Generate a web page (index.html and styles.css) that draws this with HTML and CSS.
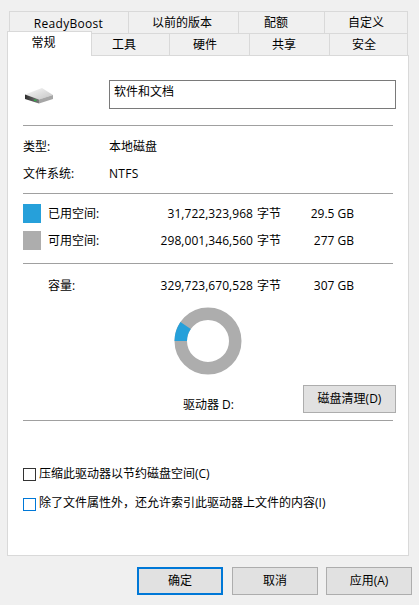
FILE: index.html
```html
<!DOCTYPE html>
<html lang="zh">
<head>
<meta charset="utf-8">
<title>属性</title>
<link rel="stylesheet" href="styles.css">
</head>
<body>
<div class="tabs">
  <div class="tab-row back">
    <div class="tab w119 latin">ReadyBoost</div>
    <div class="tab w110 nudge3">以前的版本</div>
    <div class="tab w86 nudge11">配额</div>
    <div class="tab w83">自定义</div>
  </div>
  <div class="tab-row front">
    <div class="tab w78 nudge13">工具</div>
    <div class="tab w80 nudge9">硬件</div>
    <div class="tab w80 nudge11">共享</div>
    <div class="tab w78 nudge9">安全</div>
  </div>
  <div class="tab selected">常规</div>
</div>
<main class="panel">
  <div class="head">
    <svg class="drive" width="30" height="18" viewBox="0 0 30 18">
      <defs>
        <linearGradient id="top" x1="0" y1="0" x2="1" y2="1"><stop offset="0" stop-color="#fafafa"/><stop offset="1" stop-color="#c4c4c4"/></linearGradient>
        <linearGradient id="front" x1="0" y1="0" x2="1" y2="0"><stop offset="0" stop-color="#2e2e2e"/><stop offset="1" stop-color="#7a7a7a"/></linearGradient>
      </defs>
      <path d="M1 7.5 18 1 29 8 15 12.5Z" fill="url(#top)"/>
      <path d="M1 7.5 15 12.5V16.5L1 12Z" fill="url(#front)"/>
      <path d="M15 12.5 29 8V12L15 16.5Z" fill="#a6a6a6"/>
      <path d="M10 12.5h2.4v1.6H10Z" fill="#2fae4a"/>
    </svg>
    <div class="name">软件和文档</div>
  </div>
  <hr class="sep s1">
  <div class="info first"><span class="lbl">类型:</span><span>本地磁盘</span></div>
  <div class="info second"><span class="lbl">文件系统:</span><span class="wide">NTFS</span></div>
  <hr class="sep s2">
  <div class="space used"><i class="swatch blue"></i><span class="sl">已用空间:</span><span class="bytes">31,722,323,968</span><span class="unit">字节</span><span class="gb">29.5 GB</span></div>
  <div class="space free"><i class="swatch grey"></i><span class="sl">可用空间:</span><span class="bytes">298,001,346,560</span><span class="unit">字节</span><span class="gb">277 GB</span></div>
  <hr class="sep s3">
  <div class="space cap"><i class="noswatch"></i><span class="sl">容量:</span><span class="bytes">329,723,670,528</span><span class="unit">字节</span><span class="gb">307 GB</span></div>
  <svg class="donut" width="68" height="68" viewBox="-34 -34 68 68">
    <circle r="27.25" fill="none" stroke="#adadad" stroke-width="12.5"/>
    <path d="M-27.25 0A27.25 27.25 0 0 1-22.4-15.5" fill="none" stroke="#26a0da" stroke-width="12.5"/>
  </svg>
  <div class="drive-row">
    <span class="dl">驱动器 D:</span>
    <button class="btn clean">磁盘清理(D)</button>
  </div>
  <hr class="sep s4">
  <label class="check c1"><i class="box"></i><span>压缩此驱动器以节约磁盘空间(C)</span></label>
  <label class="check c2"><i class="box hot"></i><span>除了文件属性外，还允许索引此驱动器上文件的内容(I)</span></label>
</main>
<footer class="actions">
  <button class="btn act default">确定</button>
  <button class="btn act">取消</button>
  <button class="btn act">应用(A)</button>
</footer>
</body>
</html>
```
FILE: styles.css
```css
* { box-sizing: border-box; }
html, body { margin: 0; height: 100%; }
body {
  width: 419px;
  height: 605px;
  overflow: hidden;
  background: #f0f0f0;
  color: #000;
  font: 12px/16px "Open Sans", "Noto Sans CJK SC", sans-serif;
  padding: 11px 0 0 7px;
}
.tabs { position: relative; width: 402px; height: 44px; }
.tab-row { display: flex; height: 22px; margin-left: 2px; }
.tab-row.front { margin-left: 84px; }
.tab {
  display: flex;
  align-items: center;
  justify-content: center;
  height: 22px;
  border: 1px solid #d9d9d9;
  border-bottom: 0;
  margin-right: -1px;
  background: #f0f0f0;
}
.w119 { width: 120px; }
.w110 { width: 111px; }
.w86 { width: 87px; }
.w83 { width: 84px; }
.w78 { width: 79px; }
.w80 { width: 81px; }
.latin { letter-spacing: .3px; padding: 2px 1px 0 0; }
.nudge3 { padding-right: 3px; }
.nudge9 { padding-right: 9px; }
.nudge11 { padding-right: 11px; }
.nudge13 { padding-right: 13px; }
.tab.selected {
  position: absolute;
  left: 0;
  top: 20px;
  width: 85px;
  height: 25px;
  z-index: 2;
  background: #fff;
  padding: 0 12px 3px 0;
}
.panel {
  width: 402px;
  height: 501px;
  background: #fff;
  border: 1px solid #d9d9d9;
  padding: 24px 12px 0 15px;
}
.head { display: flex; align-items: flex-start; height: 29px; }
.drive { margin: 7px 0 0 1px; }
.name {
  margin-left: 55px;
  width: 287px;
  height: 29px;
  border: 1px solid #7a7a7a;
  padding: 3px 4px;
}
.sep { display: block; width: 370px; height: 1px; margin: 0; border: 0; background: #a0a0a0; }
.s1 { margin-top: 16px; }
.s2 { margin-top: 11px; }
.s3 { margin-top: 13px; }
.s4 { margin-top: 7px; }
.info { display: flex; height: 16px; }
.first { margin-top: 13px; }
.second { margin-top: 11px; }
.lbl { width: 86px; }
.wide { letter-spacing: .3px; }
.space { display: flex; align-items: center; height: 19px; }
.used { margin-top: 10px; }
.free { margin-top: 8px; }
.cap { margin-top: 12px; height: 19px; }
.swatch { flex: none; width: 18px; height: 19px; }
.noswatch { flex: none; width: 18px; }
.blue { background: #26a0da; }
.grey { background: #adadad; }
.sl { width: 60px; margin-left: 7px; }
.bytes { width: 145px; text-align: right; letter-spacing: .05px; }
.unit { margin-left: 4px; width: 24px; }
.gb { width: 73px; text-align: right; }
.donut { display: block; margin: 12px 0 0 151px; }
.drive-row { display: flex; align-items: flex-end; height: 38px; padding-left: 160px; }
.dl { width: 120px; line-height: 16px; }
.btn {
  display: block;
  padding: 0;
  border: 1px solid #adadad;
  background: #e1e1e1;
  color: #000;
  font: inherit;
}
.clean { width: 93px; height: 28px; }
.check { display: flex; align-items: center; height: 16px; }
.c1 { margin-top: 45px; }
.c2 { margin-top: 13px; }
.box { flex: none; width: 13px; height: 13px; border: 1px solid #333; background: #fff; margin-right: 3px; }
.box.hot { border-color: #0078d7; margin-top: 3px; }
.actions { display: flex; gap: 9px; margin: 11px 0 0 130px; }
.act { width: 86px; height: 28px; }
.act:last-child { margin-left: -1px; }
.default { border: 2px solid #0078d7; }
```
